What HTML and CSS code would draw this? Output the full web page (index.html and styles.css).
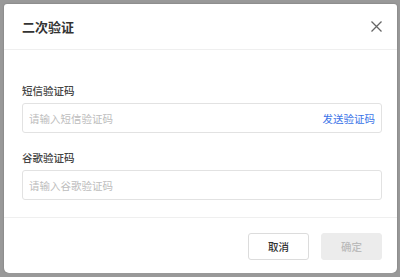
FILE: index.html
```
<!DOCTYPE html>
<html lang="zh-CN">

<head>
    <meta charset="UTF-8" />
    <meta name="viewport" content="width=device-width, initial-scale=1.0" />
    <title>二次验证</title>
    <link rel="stylesheet" href="styles.css">
</head>

<body>
    <div class="modal">
        <header class="modal-head">
            <h2>二次验证</h2>
            <button class="close" aria-label="关闭">
                <svg width="11" height="11" viewBox="0 0 11 11">
                    <path d="M0.5 0.5L10.5 10.5M10.5 0.5L0.5 10.5" stroke="#666" stroke-width="1.3" fill="none" />
                </svg>
            </button>
        </header>
        <main class="modal-body">
            <div class="field">
                <label>短信验证码</label>
                <div class="input-box">
                    <input type="text" placeholder="请输入短信验证码">
                    <a class="send" href="#">发送验证码</a>
                </div>
            </div>
            <div class="field">
                <label>谷歌验证码</label>
                <div class="input-box">
                    <input type="text" placeholder="请输入谷歌验证码">
                </div>
            </div>
        </main>
        <footer class="modal-foot">
            <button class="btn">取消</button>
            <button class="btn btn-ok" disabled>确定</button>
        </footer>
    </div>
</body>

</html>
```

FILE: styles.css
```
body {
    margin: 0;
    background: #999;
    font-family: "Noto Sans CJK SC", "Noto Sans", sans-serif;
    color: #333;
}

.modal {
    margin: 4px 3px 0 4px;
    width: 393px;
    height: 269px;
    background: #fff;
    border-radius: 3px 3px 5px 5px;
    box-shadow: 0 0 2px rgba(0, 0, 0, 0.25);
    display: flex;
    flex-direction: column;
}

.modal-head {
    height: 45px;
    padding: 0 15px 0 18px;
    display: flex;
    justify-content: space-between;
    align-items: center;
    border-bottom: 1px solid #efefef;
}

.modal-head h2 {
    margin: 0;
    font-size: 13px;
    font-weight: 600;
    color: #333;
}

.close {
    background: none;
    border: none;
    padding: 0;
    display: flex;
    cursor: pointer;
}

.modal-body {
    padding: 33px 15px 17px 18px;
    display: flex;
    flex-direction: column;
    gap: 17px;
    border-bottom: 1px solid #efefef;
}

.field {
    display: flex;
    flex-direction: column;
    gap: 4px;
}

.field label {
    font-size: 10.5px;
    line-height: 16px;
    font-weight: 500;
    color: #444;
}

.input-box {
    height: 28px;
    border: 1px solid #e2e2e2;
    border-radius: 3px;
    display: flex;
    align-items: center;
    padding: 0 6px;
}

.input-box input {
    flex: 1;
    border: none;
    outline: none;
    font-family: inherit;
    font-size: 10.5px;
    padding: 0;
    color: #333;
}

.input-box input::placeholder {
    color: #bdbdbd;
}

.send {
    font-size: 10.5px;
    color: #3b73e8;
    text-decoration: none;
}

.modal-foot {
    flex: 1;
    display: flex;
    justify-content: flex-end;
    align-items: flex-start;
    gap: 12px;
    padding: 15px 15px 0 0;
}

.btn {
    width: 61px;
    height: 27px;
    border: 1px solid #dcdcdc;
    border-radius: 3px;
    background: #fff;
    font-family: inherit;
    font-size: 10.5px;
    font-weight: 500;
    color: #333;
    cursor: pointer;
}

.btn-ok {
    border-color: #ececec;
    background: #ececec;
    color: #bbb;
    cursor: default;
}
```
